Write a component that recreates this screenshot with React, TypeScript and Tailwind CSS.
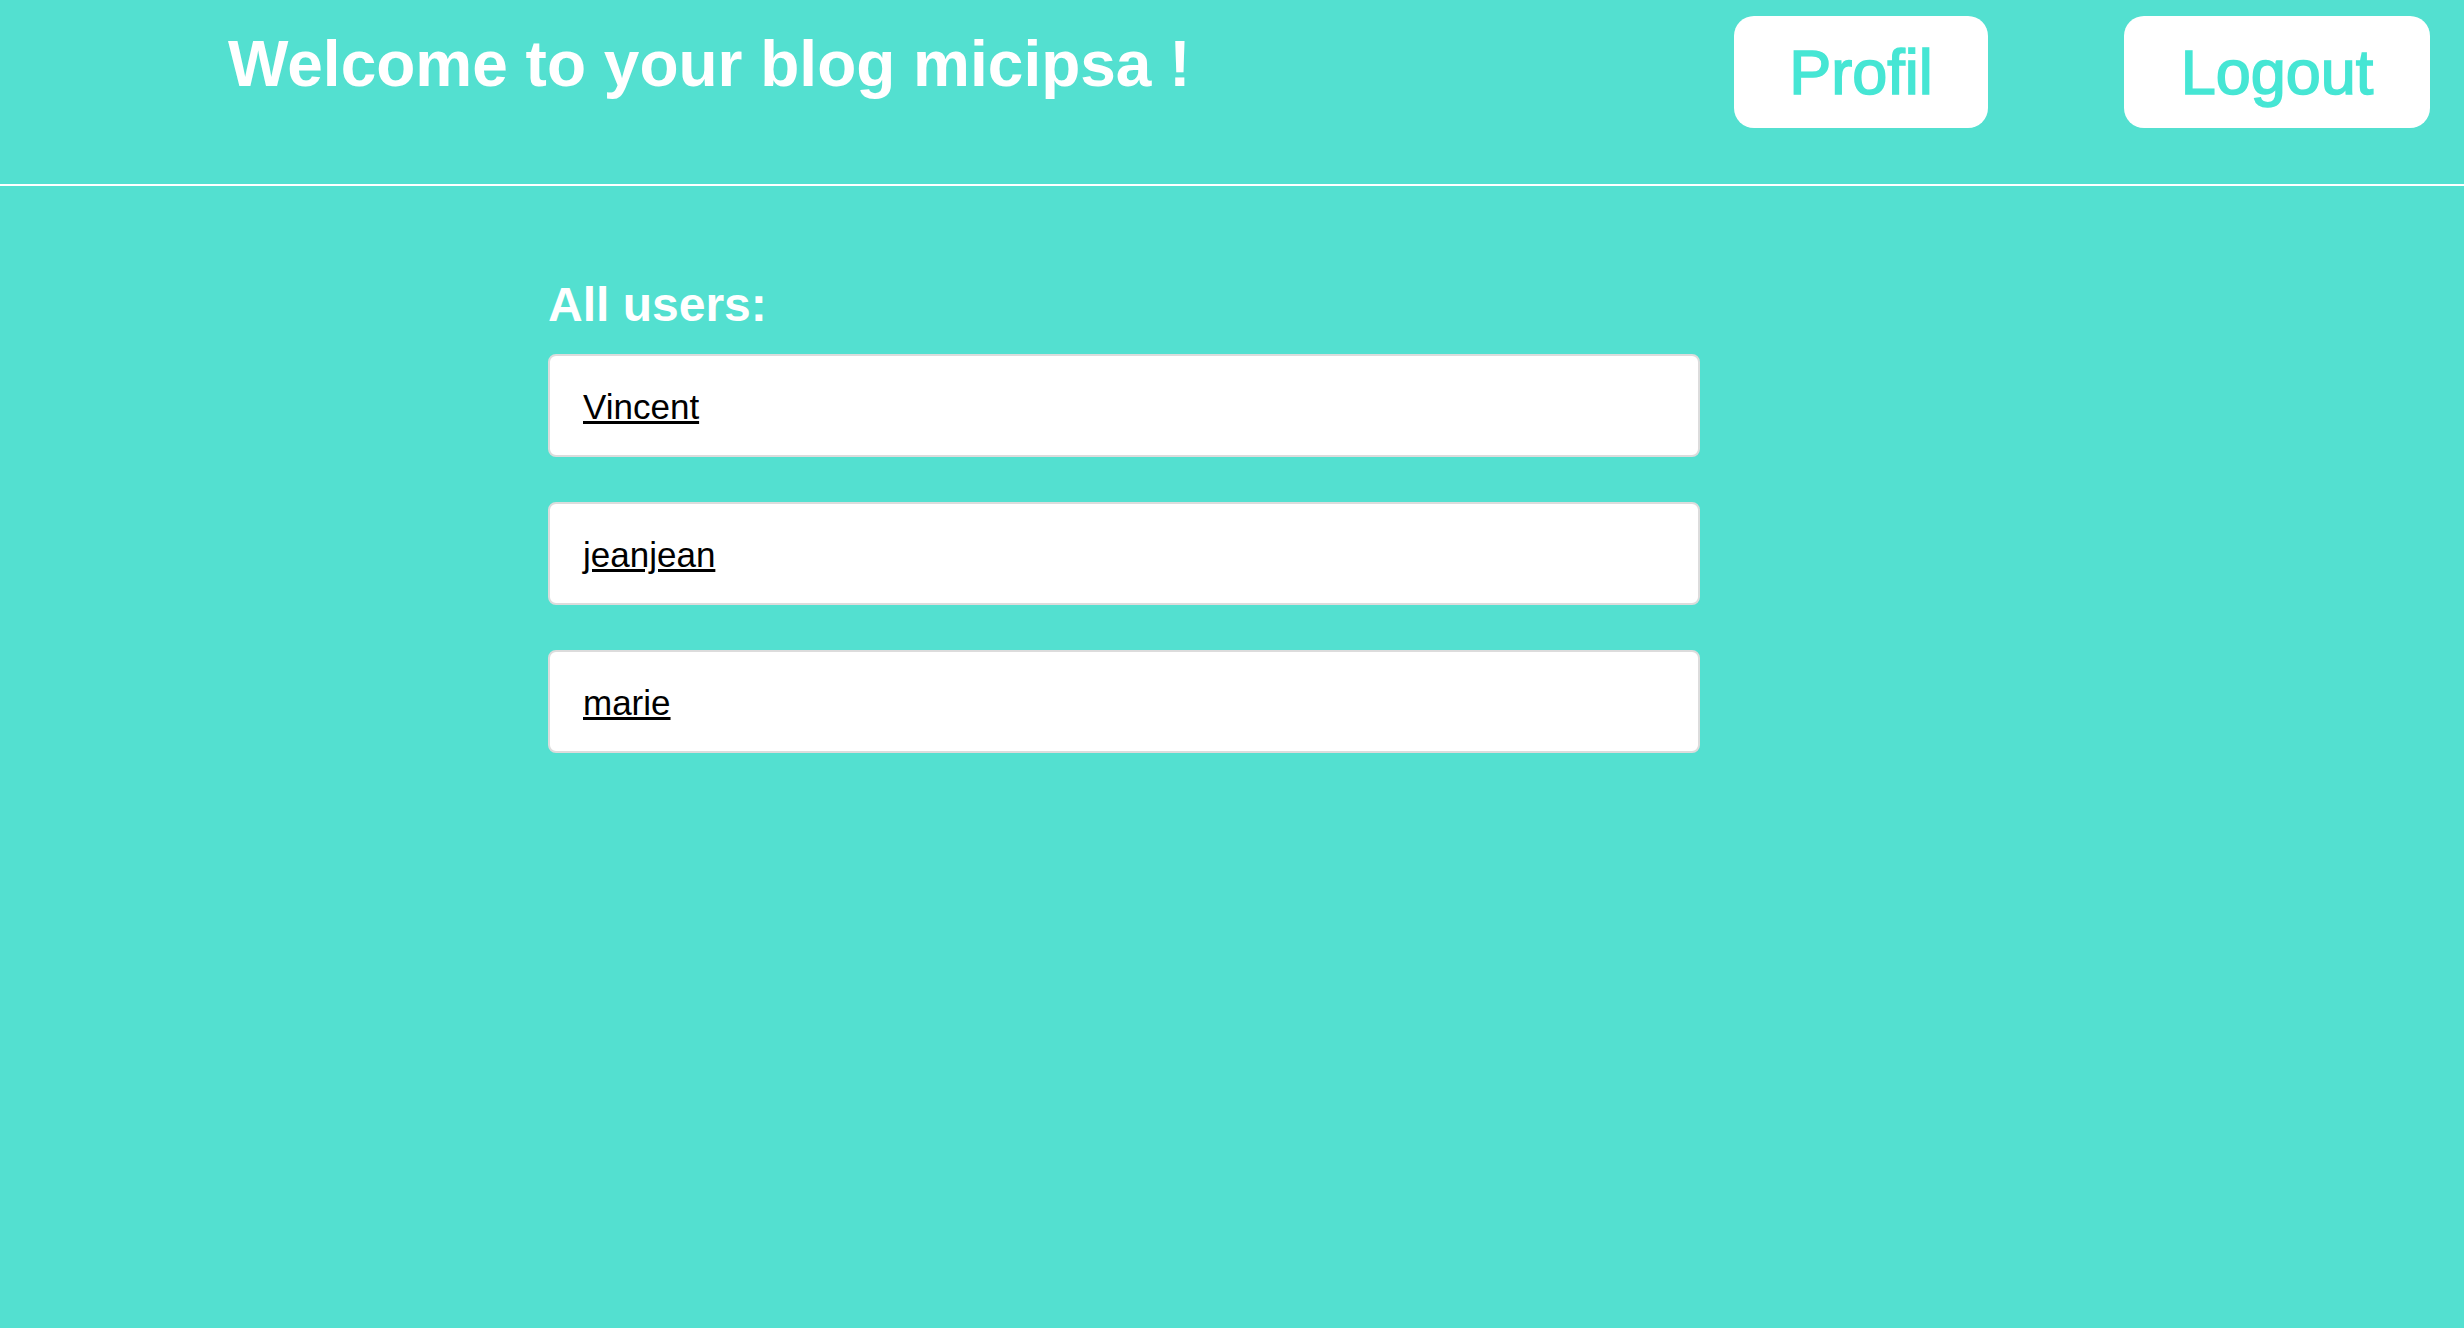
export default function App() {
  const users = ["Vincent", "jeanjean", "marie"]

  return (
    <div className="min-h-screen w-full bg-[#53e0d0] font-['Liberation_Sans',Arial,sans-serif]">
      {/* Header */}
      <header className="flex h-[186px] items-start border-b-2 border-white pl-[228px] pr-[34px]">
        <h1 className="mt-[32px] text-[64px] font-bold leading-[64px] text-white">
          Welcome to your blog micipsa !
        </h1>
        <div className="ml-auto mt-[16px] flex gap-[136px]">
          <button className="flex h-[112px] w-[254px] items-center justify-center rounded-[20px] bg-white text-[63px] leading-none text-[#46e6d4] [-webkit-text-stroke:1.6px_#46e6d4]">
            Profil
          </button>
          <button className="flex h-[112px] w-[306px] items-center justify-center rounded-[20px] bg-white text-[63px] leading-none text-[#46e6d4] [-webkit-text-stroke:1.6px_#46e6d4]">
            Logout
          </button>
        </div>
      </header>

      {/* Users list */}
      <main className="ml-[548px] w-[1152px] pt-[95px]">
        <h2 className="text-[48px] font-bold leading-[48px] text-white">All users:</h2>
        <div className="mt-[25px] flex flex-col gap-[45px]">
          {users.map((name) => (
            <div
              key={name}
              className="flex h-[103px] items-center rounded-[8px] border-2 border-[#dcdcdc] bg-white pl-[33px] pt-[3px]"
            >
              <a href="#" className="text-[35px] text-black underline">
                {name}
              </a>
            </div>
          ))}
        </div>
      </main>
    </div>
  )
}
